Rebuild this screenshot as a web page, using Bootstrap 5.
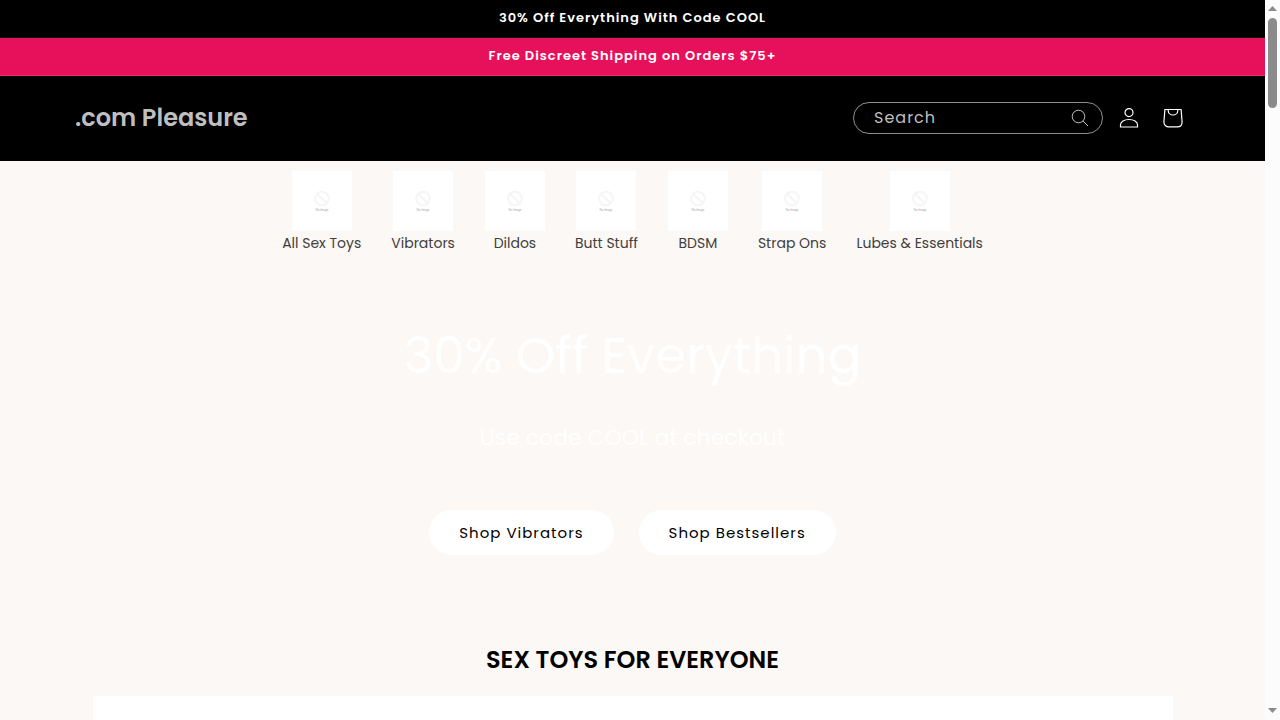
<!DOCTYPE html>
<html lang="en">
<head>
<meta charset="utf-8">
<meta name="viewport" content="width=device-width, initial-scale=1">
<title>.com Pleasure</title>
<link href="https://cdn.jsdelivr.net/npm/bootstrap@5.3.0/dist/css/bootstrap.min.css" rel="stylesheet">
<style>
body{font-family:Poppins,Inter,"Liberation Sans",sans-serif;background:#fcf8f5;color:#000;height:100vh}
.promo{font-size:13px;line-height:18px;letter-spacing:1px;padding:9px 15px 10px;border-bottom:1px solid #141414}
.promo-pink{background:#e7105b;border-color:#ea3071}
.site-header{padding:20px 70px 21px 75px}
.brand{font-size:24px;line-height:44px;color:#bfbfbf}
.search-box{width:250px;height:32px;border:1px solid #8f8f8f;border-radius:16px;color:#bfbfbf}
.search-box input{background:none;border:0;outline:0;color:inherit;font-size:16px;letter-spacing:1px;padding:0 0 0 20px;min-width:0}
.search-box input::placeholder{color:#bfbfbf;opacity:1}
.search-box button{width:44px}
.head-icon{width:44px;height:44px;color:#fff}
.cats{gap:30px;padding:10px 15px 0}
.cats a{font-size:14px;line-height:24px;color:#404040}
.thumb{width:60px;height:60px}
.banner{padding:67px 15px 89px}
.hero-title{font-size:50px;line-height:68px;margin-bottom:32px}
.hero-sub{font-size:22px;line-height:32px;margin-bottom:56px}
.hero-actions{gap:25px}
.pill{font-size:15px;line-height:23px;letter-spacing:1px;padding:10px 29px;border-radius:40px;background:#fff;color:#000}
.section-title{font-size:24px;line-height:32px;margin-bottom:20px}
.panel{max-width:1080px;height:400px}
.scroll-rail{width:15px;background:#fcfcfc;padding:6px 0 7px;gap:7px}
.scroll-thumb{width:9px;height:90px;border-radius:5px;background:#8b8b8b}
</style>
</head>
<body class="d-flex overflow-hidden">
<div class="flex-grow-1 overflow-hidden">
  <div class="promo bg-black text-white text-center fw-semibold">30% Off Everything With Code COOL</div>
  <div class="promo promo-pink text-white text-center fw-semibold">Free Discreet Shipping on Orders $75+</div>
  <header class="site-header bg-black d-flex align-items-center">
    <a href="#" class="brand fw-semibold text-decoration-none me-auto">.com Pleasure</a>
    <form class="search-box d-flex me-1" role="search">
      <input type="search" class="flex-fill" placeholder="Search" aria-label="Search">
      <button type="button" class="btn p-0 border-0 text-reset d-flex flex-shrink-0 align-items-center justify-content-center" aria-label="Search">
        <svg width="18" height="18" viewBox="0 0 18 18" fill="none" stroke="currentColor"><circle cx="7.5" cy="7.5" r="6.3"/><path d="M12 12l5 5"/></svg>
      </button>
    </form>
    <a href="#" class="head-icon d-flex align-items-center justify-content-center" aria-label="Log in">
      <svg width="20" height="20" viewBox="0 0 20 20" fill="none" stroke="currentColor" stroke-width="1.2"><circle cx="10" cy="4.600" r="4"/><path d="M1.500 19v-2.200c0-3.100 3.600-5.300 8.500-5.300s8.500 2.200 8.500 5.300v2.200z"/></svg>
    </a>
    <a href="#" class="head-icon d-flex align-items-center justify-content-center" aria-label="Cart">
      <svg width="20" height="20" viewBox="0 0 20 20" fill="none" stroke="currentColor" stroke-width="1.2"><path d="M1.900 1.500h16.200l1 12.500c0 2.900-2 4.900-4.900 4.900h-8.400c-2.900 0-4.900-2-4.900-4.900z"/><path d="M5.200 1.500v.9a4.800 4.600 0 0 0 9.600 0v-.9"/></svg>
    </a>
  </header>

  <svg class="d-none" aria-hidden="true">
    <symbol id="no-image" viewBox="0 0 60 60">
      <rect width="60" height="60" fill="#fff"/>
      <g fill="none" stroke="#f5f5f5" stroke-width="2"><circle cx="30" cy="27.500" r="6.800"/><path d="M25.200 22.700l9.600 9.600"/></g>
      <text x="30" y="40" font-size="3" font-family="Liberation Sans" text-anchor="middle" fill="#a8a8a8">No Image</text>
    </symbol>
  </svg>
  <nav class="cats d-flex justify-content-center" aria-label="Categories">
    <a href="#" class="d-flex flex-column align-items-center text-decoration-none"><svg class="thumb"><use href="#no-image"/></svg>All Sex Toys</a>
    <a href="#" class="d-flex flex-column align-items-center text-decoration-none"><svg class="thumb"><use href="#no-image"/></svg>Vibrators</a>
    <a href="#" class="d-flex flex-column align-items-center text-decoration-none"><svg class="thumb"><use href="#no-image"/></svg>Dildos</a>
    <a href="#" class="d-flex flex-column align-items-center text-decoration-none"><svg class="thumb"><use href="#no-image"/></svg>Butt Stuff</a>
    <a href="#" class="d-flex flex-column align-items-center text-decoration-none"><svg class="thumb"><use href="#no-image"/></svg>BDSM</a>
    <a href="#" class="d-flex flex-column align-items-center text-decoration-none"><svg class="thumb"><use href="#no-image"/></svg>Strap Ons</a>
    <a href="#" class="d-flex flex-column align-items-center text-decoration-none"><svg class="thumb"><use href="#no-image"/></svg>Lubes &amp; Essentials</a>
  </nav>

  <section class="banner text-center">
    <h1 class="hero-title text-white fw-normal">30% Off Everything</h1>
    <p class="hero-sub text-white">Use code COOL at checkout</p>
    <div class="hero-actions d-flex justify-content-center">
      <button type="button" class="btn pill">Shop Vibrators</button>
      <button type="button" class="btn pill">Shop Bestsellers</button>
    </div>
  </section>

  <h2 class="section-title fw-semibold text-center">SEX TOYS FOR EVERYONE</h2>
  <div class="panel bg-white mx-auto"></div>
</div>
<div class="scroll-rail d-flex flex-column align-items-center flex-shrink-0" aria-hidden="true">
  <svg width="9" height="5" viewBox="0 0 9 5"><path d="M0 5L4.500 0L9 5z" fill="#8b8b8b"/></svg>
  <div class="scroll-thumb mb-auto"></div>
  <svg width="9" height="5" viewBox="0 0 9 5"><path d="M0 0L4.500 5L9 0z" fill="#8b8b8b"/></svg>
</div>
<script src="https://cdn.jsdelivr.net/npm/bootstrap@5.3.0/dist/js/bootstrap.bundle.min.js"></script>
</body>
</html>
